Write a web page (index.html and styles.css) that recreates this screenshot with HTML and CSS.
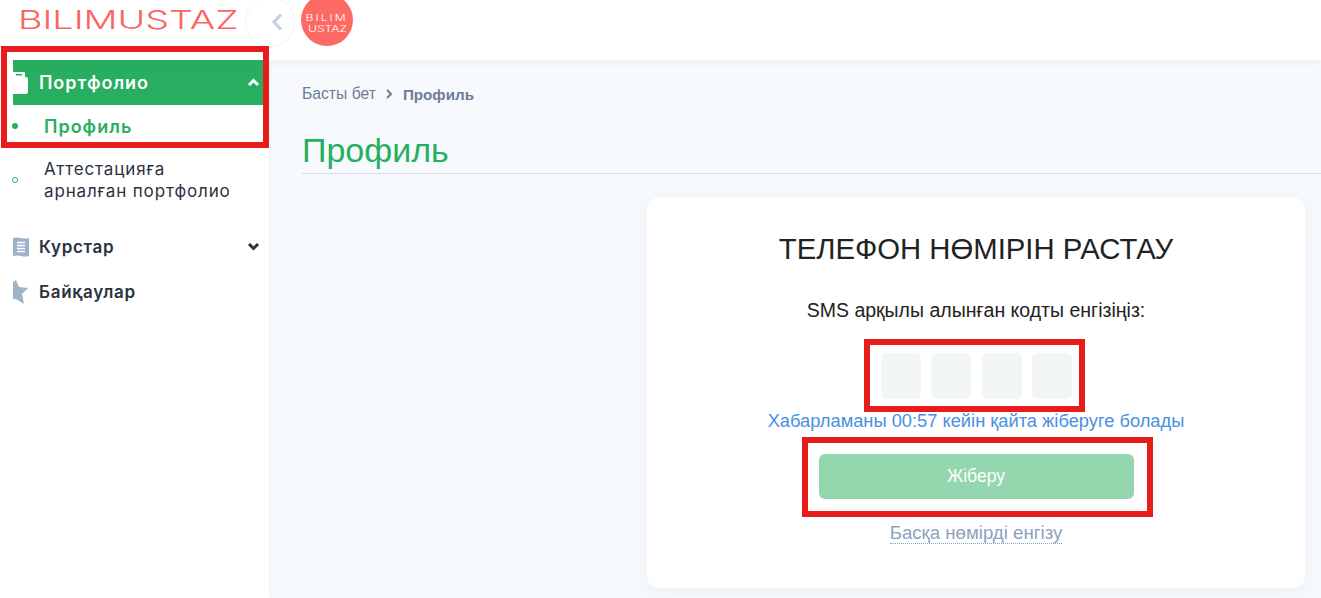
FILE: index.html
```html
<!DOCTYPE html>
<html lang="en">
<head>
  <meta charset="UTF-8" />
  <meta name="viewport" content="width=device-width, initial-scale=1.0"/>
  <title>Профиль - Bilimustaz</title>
  <link rel="stylesheet" href="styles.css">
</head>
<body>
  <header class="topbar">
    <div class="logo"><span>BILIMUSTAZ</span></div>
    <button class="collapse-btn" aria-label="Collapse">
      <svg width="12" height="18" viewBox="0 0 12 18"><path d="M10 1.500 3 9l7 7.500" fill="none" stroke="#c3d0de" stroke-width="3"/></svg>
    </button>
    <div class="avatar"><span class="avatar-top">BILIM</span><span>USTAZ</span></div>
  </header>

  <div class="page">
    <aside class="sidebar">
      <div class="menu-item active">
        <svg class="menu-icon" width="15" height="22" viewBox="0 0 15 22"><path d="M0 0h11q1 0 1 1v4h1q2 0 2 2v13q0 2-2 2H0zM3 2v1.500h6V2z" fill="#fff" fill-rule="evenodd"/></svg>
        <span class="menu-label">Портфолио</span>
        <svg class="chevron" width="13" height="9" viewBox="0 0 13 9"><path d="M2 7l4.500-4.500L11 7" fill="none" stroke="#fff" stroke-width="3"/></svg>
      </div>
      <div class="sub-item current"><i class="dot"></i><span>Профиль</span></div>
      <div class="sub-item"><i class="ring"></i><span>Аттестацияға<br>арналған портфолио</span></div>

      <div class="menu-item courses">
        <svg class="menu-icon" width="17" height="20" viewBox="0 0 17 20"><path d="M0 1q4-1 8 0 4 1 8 0v18q-4 1-8 0-4-1-8 0z" fill="#9fb3c8"/><path d="M4 5.500h8M4 8.500h8M4 11.500h8M4 14.500h8" stroke="#fff" stroke-width="1.300"/></svg>
        <span class="menu-label">Курстар</span>
        <svg class="chevron" width="13" height="9" viewBox="0 0 13 9"><path d="M2 2l4.500 4.500L11 2" fill="none" stroke="#2b3240" stroke-width="3"/></svg>
      </div>
      <div class="menu-item contests">
        <svg class="menu-icon" width="16" height="24" viewBox="0 0 16 24"><path d="M3 0l3 7 9 1-6 6 2 10-8-5H0V2z" fill="#9fb3c8"/></svg>
        <span class="menu-label">Байқаулар</span>
      </div>
    </aside>

    <main class="content">
      <nav class="breadcrumb">
        <span>Басты бет</span>
        <svg width="8" height="10" viewBox="0 0 8 10"><path d="M2 1l4 4-4 4" fill="none" stroke="#6f7b96" stroke-width="2"/></svg>
        <strong>Профиль</strong>
      </nav>
      <h1 class="page-title">Профиль</h1>

      <section class="card">
        <h2>ТЕЛЕФОН НӨМІРІН РАСТАУ</h2>
        <p class="hint">SMS арқылы алынған кодты енгізіңіз:</p>
        <div class="code-row">
          <input class="code-box" type="text" maxlength="1" />
          <input class="code-box" type="text" maxlength="1" />
          <input class="code-box" type="text" maxlength="1" />
          <input class="code-box" type="text" maxlength="1" />
        </div>
        <p class="resend">Хабарламаны 00:57 кейін қайта жіберуге болады</p>
        <button class="send-btn">Жіберу</button>
        <a class="other-number" href="#">Басқа нөмірді енгізу</a>
      </section>
    </main>
  </div>

  <!-- red annotations drawn on top of the screenshot -->
  <div class="mark mark-menu"></div>
  <div class="mark mark-code"></div>
  <div class="mark mark-send"></div>
</body>
</html>
```

FILE: styles.css
```css
* {
  margin: 0;
  padding: 0;
  box-sizing: border-box;
}

html, body {
  height: 100%;
  overflow: hidden;
}

body {
  font-family: 'Inter', sans-serif;
  background: #f7fafd;
  color: #2b3240;
  position: relative;
}

.topbar {
  height: 60px;
  background: #fff;
  box-shadow: 0 2px 8px rgba(90, 110, 140, 0.08);
  display: flex;
  align-items: flex-start;
  padding-left: 18px;
  position: relative;
  z-index: 2;
}

.logo {
  width: 227px;
  margin-top: 5px;
  font-size: 26px;
  font-weight: 300;
  line-height: 30px;
  color: #f9655f;
  white-space: nowrap;
}

.logo span {
  display: inline-block;
  transform: scaleX(1.45);
  transform-origin: left center;
}

.collapse-btn {
  width: 50px;
  height: 50px;
  margin-top: -3px;
  padding-left: 14px;
  border: 1px solid #f0f3f7;
  border-radius: 50%;
  background: #fff;
  display: flex;
  align-items: center;
  justify-content: center;
  flex-shrink: 0;
}

.avatar {
  width: 52px;
  height: 52px;
  margin: -6px 0 0 6px;
  border-radius: 50%;
  background: #fd6a63;
  color: #fff;
  display: flex;
  flex-direction: column;
  align-items: center;
  justify-content: center;
  font-size: 9px;
  line-height: 11px;
  font-weight: 300;
  padding-top: 6px;
}

.avatar span {
  transform: scaleX(1.35);
}

.avatar .avatar-top {
  letter-spacing: 1.500px;
}

.page {
  display: flex;
  height: 538px;
}

.sidebar {
  width: 269px;
  background: #fff;
  flex-shrink: 0;
  padding-left: 13px;
  box-shadow: 1px 0 3px rgba(90, 110, 140, 0.06);
}

.menu-item {
  display: flex;
  align-items: center;
  height: 45px;
  font-size: 17px;
  font-weight: 600;
  letter-spacing: 0.7px;
  color: #2b3240;
  position: relative;
}

.menu-icon {
  flex-shrink: 0;
}

.menu-label {
  position: absolute;
  left: 26px;
}

.chevron {
  position: absolute;
  left: 234px;
}

.menu-item.active {
  background: #27ae60;
  color: #fff;
  font-size: 18px;
  letter-spacing: 0.95px;
}

.menu-item.courses {
  margin-top: 13px;
}

.sub-item {
  display: flex;
  align-items: center;
  margin-left: -1px;
  font-size: 17px;
  letter-spacing: 0.85px;
  line-height: 22px;
  color: #2b3240;
  padding: 9px 0;
}

.sub-item span {
  margin-left: 26px;
}

.sub-item.current {
  height: 44px;
  color: #27ae60;
  font-size: 18px;
  letter-spacing: 1px;
  font-weight: 600;
  padding: 0;
}

.sub-item.current span {
  margin-left: 26px;
}

.dot {
  width: 6px;
  height: 6px;
  border-radius: 50%;
  background: #27ae60;
  margin-bottom: 3px;
  flex-shrink: 0;
}

.ring {
  width: 6px;
  height: 6px;
  border-radius: 50%;
  border: 1px solid #27ae60;
  flex-shrink: 0;
}

.content {
  flex: 1;
  padding: 25px 0 0 33px;
  font-family: 'Liberation Sans', sans-serif;
}

.breadcrumb {
  display: flex;
  align-items: center;
  gap: 9px;
  height: 18px;
  font-size: 15.700px;
  color: #6f7b96;
}

.breadcrumb strong {
  font-size: 15.200px;
  font-weight: 700;
  margin-left: 1px;
}

.page-title {
  margin-top: 27px;
  height: 44px;
  font-size: 34px;
  line-height: 40px;
  font-weight: 400;
  color: #27ae60;
  border-bottom: 1px solid #d8dde5;
}

.card {
  width: 658px;
  height: 391px;
  margin: 23px 0 0 345px;
  padding-top: 35px;
  background: #fff;
  border-radius: 12px;
  box-shadow: 0 4px 20px rgba(90, 110, 140, 0.08);
  display: flex;
  flex-direction: column;
  align-items: center;
  color: #222;
}

.card h2 {
  font-size: 29.300px;
  line-height: 34px;
  font-weight: 400;
}

.hint {
  margin-top: 33px;
  font-size: 19.500px;
  line-height: 22px;
}

.code-row {
  display: flex;
  gap: 10.500px;
  margin-top: 32px;
  padding-left: 1px;
}

.code-box {
  width: 40px;
  height: 46px;
  border: none;
  border-radius: 6px;
  background: #f3f7f4;
}

.resend {
  margin-top: 12px;
  font-size: 18.300px;
  line-height: 20px;
  color: #4a90e2;
}

.send-btn {
  width: 315px;
  height: 45px;
  margin-top: 23px;
  border: none;
  border-radius: 6px;
  background: #94d6ae;
  color: #fff;
  font-family: inherit;
  font-size: 17.600px;
}

.other-number {
  margin-top: 24px;
  font-size: 18.650px;
  line-height: 20px;
  color: #8ba3bf;
  text-decoration: none;
  border-bottom: 1px dotted #8ba3bf;
}

.mark {
  position: absolute;
  border: 6px solid #e91c1c;
  z-index: 3;
}

.mark-menu {
  left: 1px;
  top: 46px;
  width: 268px;
  height: 102px;
}

.mark-code {
  left: 864px;
  top: 339px;
  width: 221px;
  height: 73px;
}

.mark-send {
  left: 802px;
  top: 437px;
  width: 351px;
  height: 80px;
}
```
